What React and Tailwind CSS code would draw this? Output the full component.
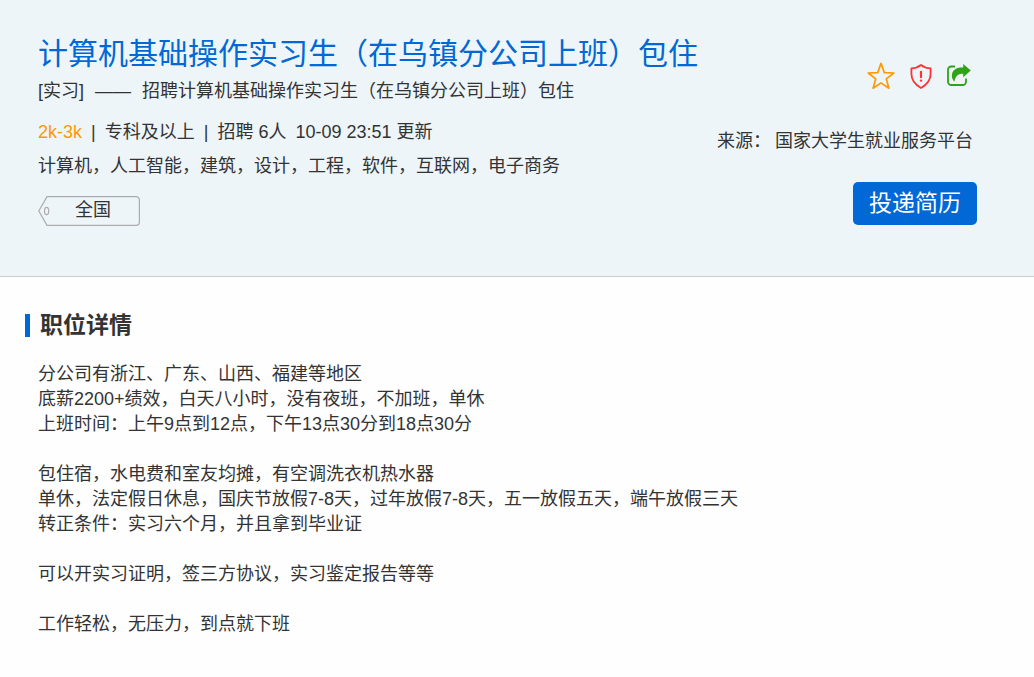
import React, { useState } from 'react';

const job = {
  title: '计算机基础操作实习生（在乌镇分公司上班）包住',
  type: '[实习]',
  summary: '招聘计算机基础操作实习生（在乌镇分公司上班）包住',
  salary: '2k-3k',
  degree: '专科及以上',
  headcount: '招聘 6人',
  updated: '10-09 23:51 更新',
  majors: '计算机，人工智能，建筑，设计，工程，软件，互联网，电子商务',
  location: '全国',
  source: '国家大学生就业服务平台',
};

const paragraphs = [
  [
    '分公司有浙江、广东、山西、福建等地区',
    '底薪2200+绩效，白天八小时，没有夜班，不加班，单休',
    '上班时间：上午9点到12点，下午13点30分到18点30分',
  ],
  [
    '包住宿，水电费和室友均摊，有空调洗衣机热水器',
    '单休，法定假日休息，国庆节放假7-8天，过年放假7-8天，五一放假五天，端午放假三天',
    '转正条件：实习六个月，并且拿到毕业证',
  ],
  ['可以开实习证明，签三方协议，实习鉴定报告等等'],
  ['工作轻松，无压力，到点就下班'],
];

const StarIcon = ({ filled }) => (
  <svg width="28" height="28" viewBox="0 0 28 28" fill={filled ? '#ff9900' : 'none'} stroke="#ff9900" strokeWidth="1.7" strokeLinejoin="round">
    <path d="M14 1.4 17.3 10.6 26.8 11 19.3 16.9 21.9 26.2 14 20.9 6.1 26.2 8.7 16.9 1.2 11 10.7 10.6Z" />
  </svg>
);

const ShieldIcon = () => (
  <svg width="24" height="26" viewBox="0 0 24 26" fill="none" stroke="#ff3333" strokeWidth="1.8" strokeLinejoin="round">
    <path d="M12 3C9.5 5 6 6.2 2.4 6.4V12C2.4 18 6 22.5 12 26C18 22.5 21.6 18 21.6 12V6.4C18 6.2 14.5 5 12 3Z" transform="translate(0 -1)" />
    <path d="M12 8.8V14.2" strokeWidth="2.2" strokeLinecap="round" />
    <circle cx="12" cy="17.6" r="1.2" fill="#ff3333" stroke="none" />
  </svg>
);

const ShareIcon = () => (
  <svg width="24" height="24" viewBox="0 0 24 24" fill="none">
    <path d="M8 2.5H4.3A3.3 3.3 0 0 0 1 5.8V17.7A3.3 3.3 0 0 0 4.3 21H15.7A3.3 3.3 0 0 0 19 17.7V14.5" stroke="#2ea315" strokeWidth="1.8" />
    <path d="M16.2 0 23.8 6.6 16.2 13.2V9.8C11.5 9.1 8.3 11.8 7.4 17.8C5.4 15.8 4.1 12.8 5.2 9.3C6.6 5.1 10.5 3.3 16.2 3.6Z" fill="#2ea315" />
  </svg>
);

const LocationTag = ({ children }) => (
  <div className="relative flex h-[30px] w-[102px] justify-center pl-2">
    <svg className="absolute inset-0" width="102" height="30" viewBox="0 0 102 30" fill="none" stroke="#acacac" strokeWidth="1.2">
      <path d="M9 0.6H98A3.4 3.4 0 0 1 101.4 4V26A3.4 3.4 0 0 1 98 29.4H9L0.8 15Z" />
      <ellipse cx="8.6" cy="15" rx="2.1" ry="3.7" />
    </svg>
    <span className="relative leading-7">{children}</span>
  </div>
);

const JobHeader = () => {
  const [favorite, setFavorite] = useState(false);

  return (
    <header className="flex justify-between border-b border-[#c8cfd1] bg-[#edf5f9] pt-[34px] pr-[57px] pb-[50px] pl-[38px]">
      <div>
        <h1 className="text-[30px] leading-10 text-[#0168d5]">{job.title}</h1>
        <p className="mt-[5px] flex gap-[11px]">
          <span>{job.type}</span>
          <span>——</span>
          <span>{job.summary}</span>
        </p>
        <p className="mt-4 flex gap-[9px]">
          <span className="text-[#ff9900]">{job.salary}</span>
          <span>|</span>
          <span>{job.degree}</span>
          <span>|</span>
          <span>{job.headcount}</span>
          <span>{job.updated}</span>
        </p>
        <p className="mt-[9px] mb-[17px]">{job.majors}</p>
        <LocationTag>{job.location}</LocationTag>
      </div>

      {/* Actions */}
      <div className="flex shrink-0 flex-col items-end pt-7">
        <div className="flex items-center gap-[14px] pr-[6px]">
          <button type="button" aria-label="收藏" aria-pressed={favorite} onClick={() => setFavorite(!favorite)}>
            <StarIcon filled={favorite} />
          </button>
          <button type="button" aria-label="举报">
            <ShieldIcon />
          </button>
          <button type="button" aria-label="分享">
            <ShareIcon />
          </button>
        </div>
        <p className="mt-[39px] flex gap-1 pr-1">
          <span>来源：</span>
          <span>{job.source}</span>
        </p>
        <button type="button" className="mt-7 h-[43px] rounded-[5px] bg-[#0168d5] px-4 pb-px text-[23px] leading-[30px] text-white">
          投递简历
        </button>
      </div>
    </header>
  );
};

const App = () => {
  return (
    <main className="min-h-screen bg-[#fefefe] font-['Liberation_Sans','Noto_Sans_CJK_SC',sans-serif] text-lg leading-[25px] text-[#333333]" lang="zh-CN">
      <JobHeader />
      <section className="px-[25px] pt-[37px] pb-10">
        <h2 className="flex items-center gap-[10px] text-[23px] leading-[23px] font-bold">
          <span className="h-[23px] w-[5px] bg-[#0168d5]" />
          职位详情
        </h2>
        <div className="mt-[25px] space-y-[25px] pl-[13px]">
          {paragraphs.map((lines) => (
            <p key={lines[0]}>
              {lines.map((line) => (
                <span key={line} className="block">{line}</span>
              ))}
            </p>
          ))}
        </div>
      </section>
    </main>
  );
};

export default App;
